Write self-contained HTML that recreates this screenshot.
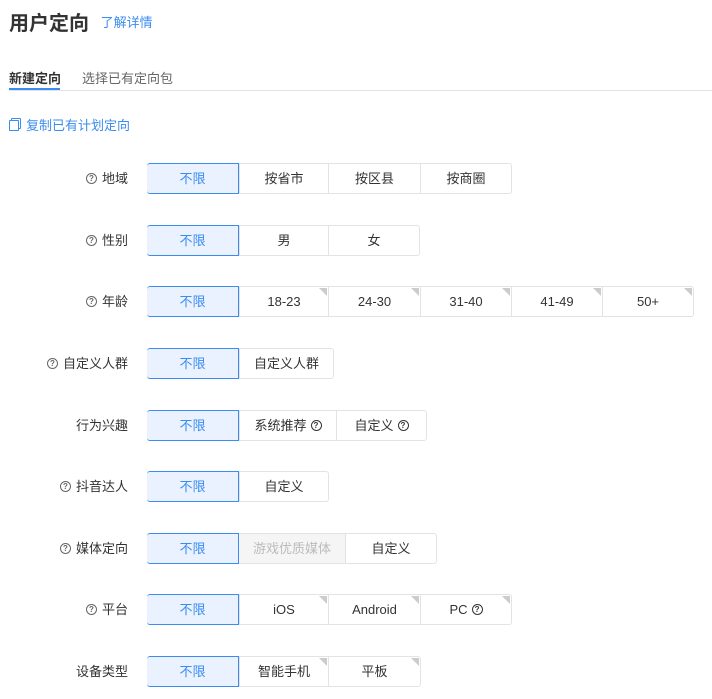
<!DOCTYPE html>
<html><head><meta charset="utf-8"><style>
*{box-sizing:border-box;margin:0;padding:0}
body{width:712px;height:699px;background:#fff;font-family:"Liberation Sans","Noto Sans CJK SC",sans-serif;color:#333;position:relative;overflow:hidden}
.a{position:absolute;white-space:nowrap}
.t{left:9px;top:7px;font-size:20px;font-weight:bold;color:#333}
.lnk{color:#3b8cf0}
.lbl{right:584px;font-size:13px;color:#333;line-height:31px;display:flex;align-items:center}
.q{display:inline-block;width:11px;height:11px;border:1px solid #666;border-radius:50%;font-size:8px;line-height:9px;text-align:center;color:#666;margin-right:5px;font-weight:bold}
.g{position:absolute;height:31px;display:flex;border:1px solid #e3e3e3;border-radius:3px;left:147px}
.b{position:relative;height:29px;line-height:29px;text-align:center;font-size:13px;color:#333;border-left:1px solid #e3e3e3;display:flex;align-items:center;justify-content:center}
.b:first-child{border-left:none}
.s{background:#e9f2fe;color:#3b8cf0;border:1px solid #3b8cf0;margin:-1px 0 -1px -1px;height:31px;border-radius:3px 0 0 3px}
.c:after{content:"";position:absolute;right:1px;top:1px;border-style:solid;border-width:0 8px 8px 0;border-color:transparent #ccc transparent transparent}
.d{background:#f5f5f5;color:#bbb}
.qi{display:inline-block;width:11px;height:11px;border:1.3px solid #333;border-radius:50%;font-size:8px;line-height:9px;text-align:center;margin-left:4px;font-weight:bold}
</style></head><body>
<div class="a t">用户定向 <span class="lnk" style="font-size:13px;font-weight:normal;margin-left:6px;vertical-align:3px">了解详情</span></div>
<div class="a" style="left:9px;top:68px;font-size:13px;font-weight:bold;color:#333">新建定向</div>
<div class="a" style="left:9px;top:88px;width:51px;height:2px;background:#3b8cf0"></div>
<div class="a" style="left:82px;top:68px;font-size:13px;color:#666">选择已有定向包</div>
<div class="a" style="left:9px;top:90px;width:703px;height:1px;background:#e3e3e3"></div>
<div class="a lnk" style="left:9px;top:115px;font-size:13px"><span style="display:inline-block;width:10px;height:11px;border:1.3px solid #3b8cf0;border-radius:1px;margin-right:7px;vertical-align:-1px;box-shadow:2px -2px 0 -1px #fff,2px -2px 0 0 #3b8cf0"></span>复制已有计划定向</div>

<div class="a lbl" style="top:163px"><span class="q">?</span>地域</div>
<div class="g" style="top:163px"><div class="b s" style="width:92px">不限</div><div class="b" style="width:89px">按省市</div><div class="b" style="width:92px">按区县</div><div class="b" style="width:91px">按商圈</div></div>

<div class="a lbl" style="top:225px"><span class="q">?</span>性别</div>
<div class="g" style="top:225px"><div class="b s" style="width:92px">不限</div><div class="b" style="width:89px">男</div><div class="b" style="width:91px">女</div></div>

<div class="a lbl" style="top:286px"><span class="q">?</span>年龄</div>
<div class="g" style="top:286px"><div class="b s" style="width:92px">不限</div><div class="b c" style="width:89px">18-23</div><div class="b c" style="width:92px">24-30</div><div class="b c" style="width:91px">31-40</div><div class="b c" style="width:91px">41-49</div><div class="b c" style="width:91px">50+</div></div>

<div class="a lbl" style="top:348px"><span class="q">?</span>自定义人群</div>
<div class="g" style="top:348px"><div class="b s" style="width:92px">不限</div><div class="b" style="width:94px">自定义人群</div></div>

<div class="a lbl" style="top:410px">行为兴趣</div>
<div class="g" style="top:410px"><div class="b s" style="width:92px">不限</div><div class="b" style="width:97px">系统推荐<span class="qi">?</span></div><div class="b" style="width:90px">自定义<span class="qi">?</span></div></div>

<div class="a lbl" style="top:471px"><span class="q">?</span>抖音达人</div>
<div class="g" style="top:471px"><div class="b s" style="width:92px">不限</div><div class="b" style="width:89px">自定义</div></div>

<div class="a lbl" style="top:533px"><span class="q">?</span>媒体定向</div>
<div class="g" style="top:533px"><div class="b s" style="width:92px">不限</div><div class="b d" style="width:106px;border-left:none">游戏优质媒体</div><div class="b" style="width:91px">自定义</div></div>

<div class="a lbl" style="top:594px"><span class="q">?</span>平台</div>
<div class="g" style="top:594px"><div class="b s" style="width:92px">不限</div><div class="b c" style="width:89px">iOS</div><div class="b c" style="width:92px">Android</div><div class="b c" style="width:91px">PC<span class="qi">?</span></div></div>

<div class="a lbl" style="top:656px">设备类型</div>
<div class="g" style="top:656px"><div class="b s" style="width:92px">不限</div><div class="b c" style="width:89px">智能手机</div><div class="b c" style="width:92px">平板</div></div>
</body></html>
